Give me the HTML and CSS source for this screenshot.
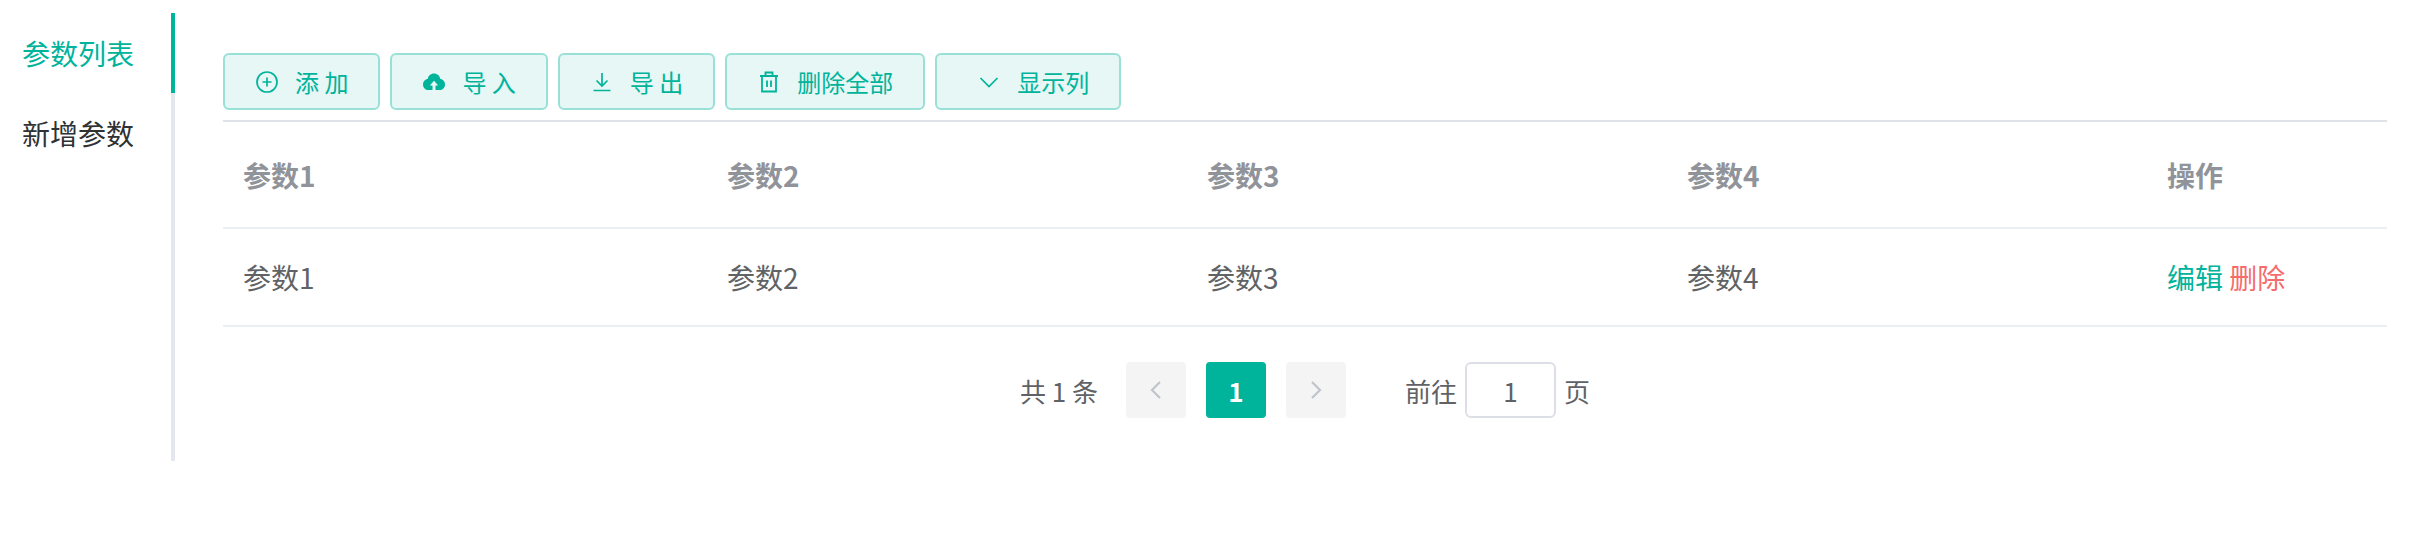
FILE: index.html
```html
<!DOCTYPE html>
<html lang="zh-CN">
<head>
    <meta charset="UTF-8">
    <meta name="viewport" content="width=device-width, initial-scale=1.0">
    <title>参数列表</title>
    <link rel="stylesheet" href="styles.css">
</head>
<body>

<div class="page">
    <div class="tabs">
        <div class="tab active">参数列表</div>
        <div class="tab">新增参数</div>
    </div>

    <div class="content">
        <div class="toolbar">
            <button class="btn">
                <svg class="icon" viewBox="0 0 24 24" fill="none" stroke="currentColor" stroke-width="1.7">
                    <circle cx="12" cy="12" r="10"/>
                    <path d="M12 7.5v9M7.5 12h9"/>
                </svg>
                <span>添 加</span>
            </button>
            <button class="btn">
                <svg class="icon" viewBox="0 0 24 24">
                    <path fill="currentColor" d="M12 3.5c-3.300 0-5.800 2.300-6.200 5.300C3 9.300 1 11.600 1 14.400c0 3.200 2.500 5.600 5.600 5.600H10.500v-4.500H7.800L12 10.800l4.200 4.700h-2.700V20h3.900c3.100 0 5.600-2.400 5.600-5.600 0-2.800-2-5.100-4.800-5.600C17.800 5.800 15.300 3.500 12 3.500z"/>
                </svg>
                <span>导 入</span>
            </button>
            <button class="btn">
                <svg class="icon" viewBox="0 0 24 24" fill="none" stroke="currentColor" stroke-width="1.7">
                    <path d="M12 3v13M6.500 10.500L12 16l5.500-5.500M3.500 20.500h17"/>
                </svg>
                <span>导 出</span>
            </button>
            <button class="btn">
                <svg class="icon" viewBox="0 0 24 24" fill="none" stroke="currentColor" stroke-width="1.8">
                    <path d="M3 6h18M8.500 6V2.500h7V6M5 6v15.500h14V6M10 10.500v6.500M14 10.500v6.500"/>
                </svg>
                <span>删除全部</span>
            </button>
            <button class="btn">
                <svg class="icon icon-arrow" viewBox="0 0 24 24" fill="none" stroke="currentColor" stroke-width="1.7">
                    <path d="M3.500 8l8.500 8.500L20.500 8"/>
                </svg>
                <span>显示列</span>
            </button>
        </div>

        <table class="table">
            <colgroup>
                <col class="col-first">
                <col class="col-mid">
                <col class="col-mid">
                <col class="col-mid">
                <col class="col-last">
            </colgroup>
            <thead>
                <tr>
                    <th>参数1</th>
                    <th>参数2</th>
                    <th>参数3</th>
                    <th>参数4</th>
                    <th>操作</th>
                </tr>
            </thead>
            <tbody>
                <tr>
                    <td>参数1</td>
                    <td>参数2</td>
                    <td>参数3</td>
                    <td>参数4</td>
                    <td><a class="link-edit">编辑</a> <a class="link-del">删除</a></td>
                </tr>
            </tbody>
        </table>

        <div class="pager">
            <span class="total">共 1 条</span>
            <div class="pages">
                <div class="page-btn">
                    <svg class="chevron" viewBox="0 0 16 24" fill="none" stroke="currentColor" stroke-width="2.200"><path d="M12 4L4 12l8 8"/></svg>
                </div>
                <div class="page-btn current">1</div>
                <div class="page-btn">
                    <svg class="chevron" viewBox="0 0 16 24" fill="none" stroke="currentColor" stroke-width="2.200"><path d="M4 4l8 8-8 8"/></svg>
                </div>
            </div>
            <div class="jump">
                <span>前往</span>
                <input class="jump-input" type="text" value="1">
                <span>页</span>
            </div>
        </div>
    </div>
</div>

</body>
</html>
```

FILE: styles.css
```css
body {
    margin: 0;
    padding: 0;
    background-color: #fff;
    font-family: "Noto Sans CJK SC", "Noto Sans", sans-serif;
}
.page {
    display: flex;
    padding-top: 13px;
}

/* left tabs */
.tabs {
    position: relative;
    width: 171px;
    height: 448px;
    border-right: 4px solid #e4e7ed;
}
.tab {
    height: 80px;
    line-height: 80px;
    padding-left: 22px;
    font-size: 28px;
    color: #303133;
}
.tab.active {
    color: #00b39b;
}
.tab.active::after {
    content: "";
    position: absolute;
    top: 0;
    right: -4px;
    width: 4px;
    height: 80px;
    background-color: #00b39b;
}

.content {
    width: 2164px;
    margin-left: 48px;
}

/* buttons */
.toolbar {
    display: flex;
    gap: 10px;
    padding-top: 40px;
    padding-bottom: 10px;
    border-bottom: 2px solid #dfe2e9;
}
.btn {
    display: flex;
    align-items: center;
    gap: 16px;
    height: 57px;
    padding: 0 30px;
    border: 2px solid #99e1d7;
    border-radius: 6px;
    background-color: #e6f7f5;
    color: #00b39b;
    font-family: inherit;
    font-size: 24px;
    white-space: pre;
}
.icon {
    width: 24px;
    height: 24px;
}
.icon-arrow {
    margin-left: 10px;
}

/* table */
.table {
    width: 2164px;
    table-layout: fixed;
    border-collapse: collapse;
    font-size: 28px;
}
.col-first {
    width: 484px;
}
.col-mid {
    width: 480px;
}
.col-last {
    width: 240px;
}
.table th,
.table td {
    padding: 0 20px;
    text-align: left;
    border-bottom: 2px solid #ebeef5;
}
.table th {
    height: 105px;
    color: #909399;
    font-weight: bold;
}
.table td {
    height: 96px;
    color: #606266;
}
.link-edit {
    color: #00b39b;
}
.link-del {
    color: #f56c6c;
}

/* pagination */
.pager {
    display: flex;
    justify-content: center;
    align-items: center;
    margin-top: 35px;
    font-size: 26px;
    color: #606266;
}
.total {
    margin-right: 28px;
}
.pages {
    display: flex;
    gap: 20px;
}
.page-btn {
    display: flex;
    justify-content: center;
    align-items: center;
    width: 60px;
    height: 56px;
    border-radius: 4px;
    background-color: #f4f4f5;
    color: #c0c4cc;
}
.page-btn.current {
    background-color: #00b39b;
    color: #fff;
    font-weight: bold;
}
.chevron {
    width: 16px;
    height: 24px;
}
.jump {
    display: flex;
    align-items: center;
    gap: 8px;
    margin-left: 59px;
}
.jump-input {
    box-sizing: border-box;
    width: 91px;
    height: 56px;
    border: 2px solid #dcdfe6;
    border-radius: 6px;
    outline: none;
    text-align: center;
    font-family: inherit;
    font-size: 26px;
    color: #606266;
}
```
